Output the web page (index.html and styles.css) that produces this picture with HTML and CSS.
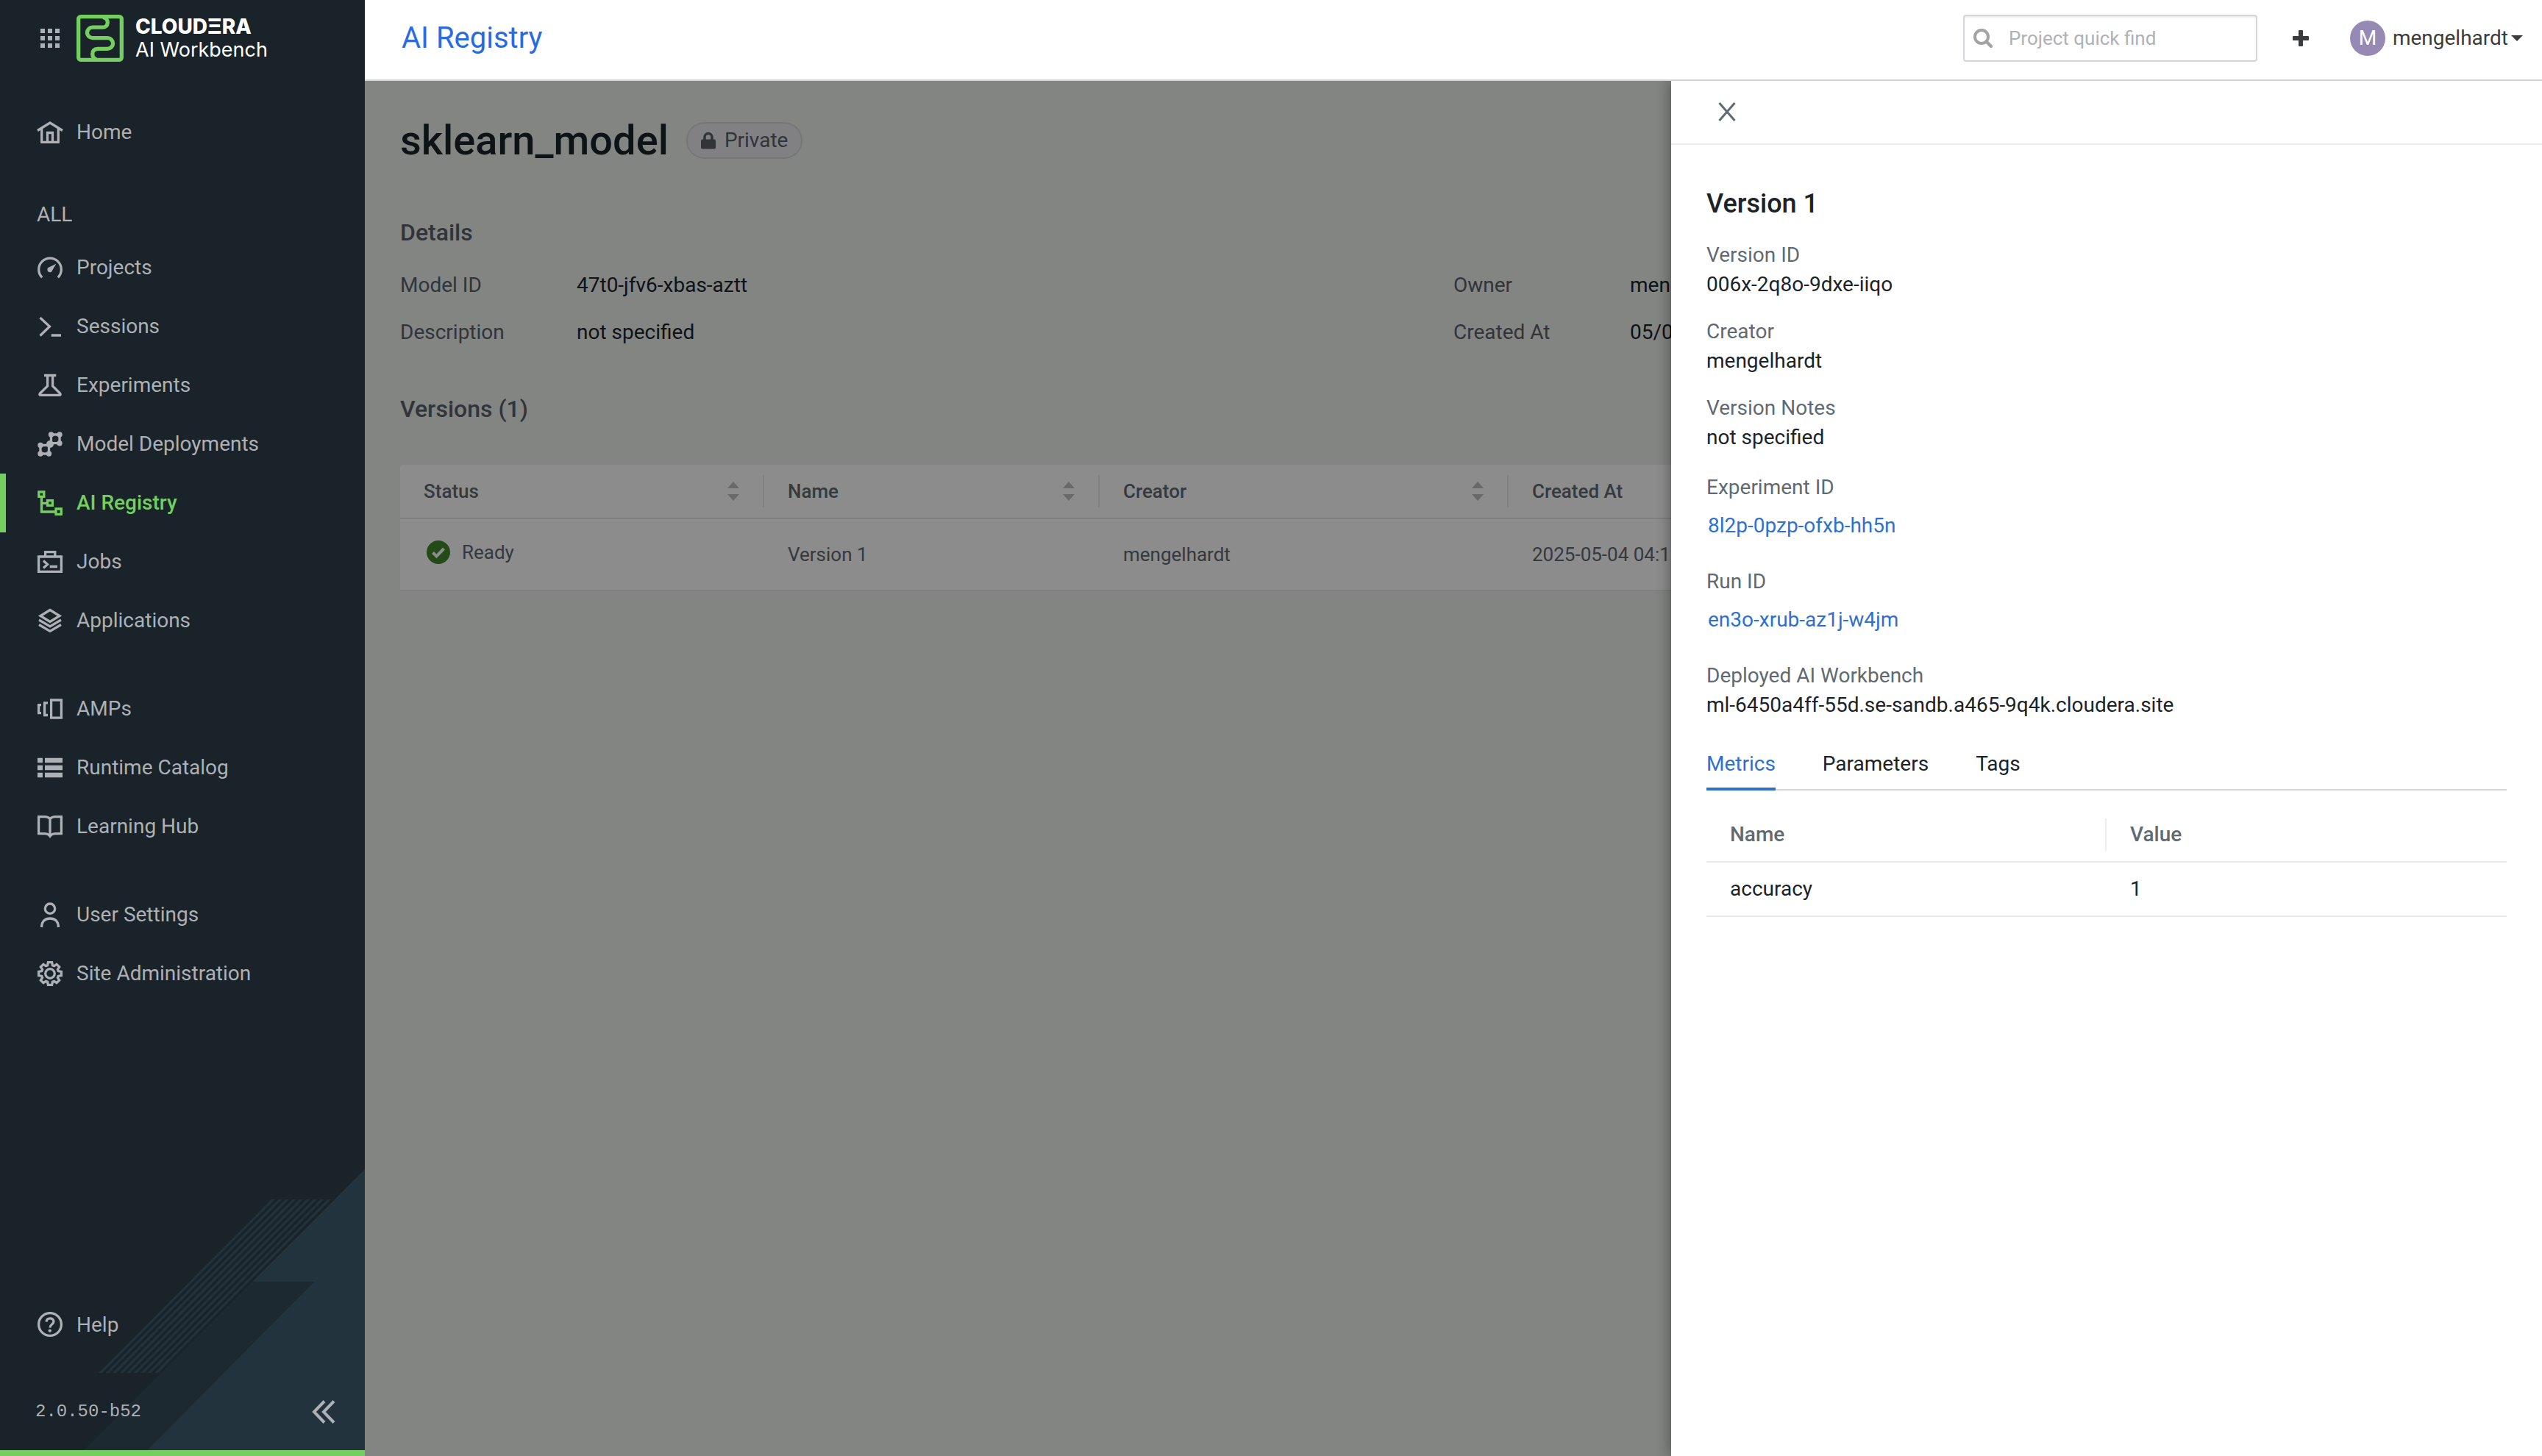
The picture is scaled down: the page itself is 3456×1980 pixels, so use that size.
FILE: index.html
```html
<!DOCTYPE html>
<html lang="en">
<head>
<meta charset="utf-8">
<title>AI Registry - sklearn_model</title>
<meta name="viewport" content="width=device-width, initial-scale=1">
<link rel="stylesheet" href="styles.css">
</head>
<body>
<div class="app">
  <aside class="sidebar">
    <svg class="sidebar-art" viewBox="0 0 496 382" aria-hidden="true">
      <path fill="#1c2931" d="M342 153H427L200 382H114Z"/>
      <path fill="#22333d" d="M496 0V382H200L427 153H342Z"/>
      <path fill="#192329" d="M369 41H455L219 277H134Z"/>
      <path fill="#21323b" d="M369 41h5L139 277h-5zM378.500 41h5L148.500 277h-5zM388 41h5L158 277h-5zM397.500 41h5L167.500 277h-5zM407 41h5L177 277h-5zM416.500 41h5L186.500 277h-5zM426 41h5L196 277h-5zM435.500 41h5L205.500 277h-5zM445 41h5L215 277h-5z"/>
    </svg>
    <div class="brand">
      <button class="icon-button" type="button" aria-label="Apps">
        <svg class="apps-icon" viewBox="0 0 28 28"><path fill="currentColor" d="M1 1h6v6H1zM11 1h6v6h-6zM21 1h6v6h-6zM1 11h6v6H1zM11 11h6v6h-6zM21 11h6v6h-6zM1 21h6v6H1zM11 21h6v6h-6zM21 21h6v6h-6z"/></svg>
      </button>
      <a class="brand-link" href="#">
        <svg class="brand-mark" viewBox="0 0 64 64" fill="none" stroke="#74cf60" stroke-width="5.300" aria-hidden="true">
          <rect x="2.650" y="2.650" width="58.700" height="58.700" rx="3"/>
          <path d="M36 3.500Q42.300 5 42.300 10.500Q42 17.200 35 17.200H21.700A7.200 7.200 0 0 0 21.700 31.600H42.200A7.400 7.400 0 0 1 42.200 46.400H29Q21.700 46.800 21.700 53.500Q21.700 59 27 61"/>
        </svg>
        <span class="brand-text"><span class="brand-name">CLOUDΞRA</span><span class="brand-product">AI Workbench</span></span>
      </a>
    </div>
    <nav class="nav" aria-label="Main">
      <a class="nav-item" href="#"><svg class="nav-icon" viewBox="0 0 36 36"><path d="M1 15.500 18 5 35 15.500M6.700 13V31.300H29.300V13M14.500 31V18.500H21.500V31"/></svg>Home</a>
      <div class="nav-heading">ALL</div>
      <a class="nav-item" href="#"><svg class="nav-icon" viewBox="0 0 36 36"><path d="M7.200 31.300A15.300 15.300 0 1 1 28.800 31.300"/><path class="solid" d="M26.300 12.700 21.300 21.500A3.500 3.500 0 1 1 17 17.300Z"/></svg>Projects</a>
      <a class="nav-item" href="#"><svg class="nav-icon" viewBox="0 0 36 36"><path d="M4.500 6 17.500 18 4.500 30.500M19.700 30H33"/></svg>Sessions</a>
      <a class="nav-item" href="#"><svg class="nav-icon" viewBox="0 0 36 36"><path d="M10 4.500H26.300M14.600 4.500V19L4.300 29Q3 31.300 5 31.300H31Q33 31.300 31.700 29L21.600 19V4.500"/></svg>Experiments</a>
      <a class="nav-item" href="#"><svg class="nav-icon" viewBox="0 0 36 36"><path d="M19.500 5H31V16.700H19.500ZM5 19.500H16.500V31H5Z"/><g class="solid"><circle cx="19.500" cy="5" r="3.700"/><circle cx="31" cy="5" r="3.700"/><circle cx="31" cy="16.700" r="3.700"/><circle cx="18" cy="18" r="5"/><circle cx="5" cy="19.500" r="3.700"/><circle cx="5" cy="31" r="3.700"/><circle cx="16.500" cy="31" r="3.700"/></g></svg>Model Deployments</a>
      <a class="nav-item active" href="#" aria-current="page"><svg class="nav-icon" viewBox="0 0 36 36"><path d="M2.800 2.800H9.800V9.300H2.800ZM14.600 14.600H21.400V21.400H14.600ZM26 26H33.300V33.300H26ZM6.500 10V30H25M6.500 18.300H14"/></svg>AI Registry</a>
      <a class="nav-item" href="#"><svg class="nav-icon" viewBox="0 0 36 36"><path d="M2.600 11H33.400V31.400H2.600ZM11.600 11V4.600H24.800V11M9 16.500 14.500 21.500 9 26.500M17.700 24.500H28"/></svg>Jobs</a>
      <a class="nav-item" href="#"><svg class="nav-icon" viewBox="0 0 36 36"><path d="M18 3.500 31 11.500 18 19.500 5 11.500ZM3 17 18 25.800 33 17M3 23.500 18 32.300 33 23.500"/></svg>Applications</a>
      <a class="nav-item nav-gap" href="#"><svg class="nav-icon" viewBox="0 0 36 36"><path d="M19.600 6H33.400V30.200H19.600ZM15 9.800H10.600V26.500H15M6 12.600H2.600V23.600H6"/></svg>AMPs</a>
      <a class="nav-item" href="#"><svg class="nav-icon" viewBox="0 0 36 36"><path class="solid" d="M1 4.700H8V11.300H1ZM11 4.700H35V11.300H11ZM1 14.700H8V21.300H1ZM11 14.700H35V21.300H11ZM1 24.700H8V31.300H1ZM11 24.700H35V31.300H11Z"/></svg>Runtime Catalog</a>
      <a class="nav-item" href="#"><svg class="nav-icon" viewBox="0 0 36 36"><path d="M2.600 4.600H11Q16.500 5 18 8Q19.500 5 25 4.600H33.400V27.700H25Q20 28 18 31Q16 28 11 27.700H2.600ZM18 8V31"/></svg>Learning Hub</a>
      <a class="nav-item nav-gap" href="#"><svg class="nav-icon" viewBox="0 0 36 36"><circle cx="18" cy="9.700" r="6.700"/><path d="M6.600 35C6.600 27 11 23 18 23S29.400 27 29.400 35"/></svg>User Settings</a>
      <a class="nav-item" href="#"><svg class="nav-icon" viewBox="0 0 36 36"><circle cx="18" cy="18" r="6.300"/><path d="M14.600 6.700 15.400 2.600H20.600L21.400 6.700 23.600 7.600 27 5.300 30.700 9 28.400 12.400 29.300 14.600 33.400 15.400V20.600L29.300 21.400 28.400 23.600 30.700 27 27 30.700 23.600 28.400 21.400 29.300 20.600 33.400H15.400L14.600 29.300 12.400 28.400 9 30.700 5.300 27 7.600 23.600 6.700 21.400 2.600 20.600V15.400L6.700 14.600 7.600 12.400 5.300 9 9 5.300 12.400 7.600Z"/></svg>Site Administration</a>
    </nav>
    <div class="sidebar-foot">
      <a class="nav-item" href="#"><svg class="nav-icon" viewBox="0 0 36 36"><circle cx="18" cy="17" r="15.400"/><path d="M13 13.500Q13.500 8.800 18 8.800T23 13Q23 15 20.500 17T18 21.500"/><circle class="solid" cx="17.800" cy="25.600" r="2.200"/></svg>Help</a>
      <div class="version-row">
        <span class="version">2.0.50-b52</span>
        <button class="icon-button" type="button" aria-label="Collapse sidebar">
          <svg class="collapse-icon" viewBox="0 0 32 32" fill="none" stroke="currentColor" stroke-width="4"><path d="M17 1.500 3 16 17 30.500M30 1.500 16 16 30 30.500"/></svg>
        </button>
      </div>
    </div>
  </aside>

  <div class="page">
    <header class="topbar">
      <a class="topbar-title" href="#">AI Registry</a>
      <div class="search">
        <svg class="search-icon" viewBox="0 0 26 26" fill="none" stroke="#a3a3a3" aria-hidden="true"><circle cx="11" cy="11" r="9" stroke-width="4"/><path d="m17.500 17.500 6.500 6.500" stroke-width="4.500" stroke-linecap="round"/></svg>
        <input class="search-input" type="search" placeholder="Project quick find" aria-label="Project quick find">
      </div>
      <button class="icon-button add" type="button" aria-label="New">
        <svg class="add-icon" viewBox="0 0 22 22" aria-hidden="true"><path fill="currentColor" d="M9 0h4q1 0 1 1v7h7q1 0 1 1v4q0 1-1 1h-7v7q0 1-1 1H9q-1 0-1-1v-7H1q-1 0-1-1V9q0-1 1-1h7V1q0-1 1-1Z"/></svg>
      </button>
      <button class="user" type="button"><span class="avatar">M</span><span class="user-name">mengelhardt</span><svg class="caret" viewBox="0 0 16 8" aria-hidden="true"><path fill="currentColor" d="M0 0H16L8 8Z"/></svg></button>
    </header>

    <div class="workspace">
      <main class="content">
        <div class="title-row">
          <h1 class="title">sklearn_model</h1>
          <span class="badge"><svg class="lock" viewBox="0 0 20 24" aria-hidden="true"><path fill="none" stroke="currentColor" stroke-width="3.500" d="M5 11V7.500a5 5 0 0 1 10 0V11"/><rect fill="currentColor" y="10.500" width="20" height="13" rx="2"/></svg>Private</span>
        </div>
        <h2 class="section-title details-title">Details</h2>
        <dl class="details">
          <div class="detail"><dt>Model ID</dt><dd>47t0-jfv6-xbas-aztt</dd></div>
          <div class="detail"><dt>Owner</dt><dd>mengelhardt</dd></div>
          <div class="detail"><dt>Description</dt><dd>not specified</dd></div>
          <div class="detail"><dt>Created At</dt><dd>05/04/2025</dd></div>
        </dl>
        <h2 class="section-title versions-title">Versions (1)</h2>
        <table class="table versions">
          <colgroup><col class="col-status"><col class="col-name"><col class="col-creator"><col></colgroup>
          <thead>
            <tr>
              <th scope="col"><div class="th">Status<svg class="sort" viewBox="0 0 16 26" aria-hidden="true"><path fill="#bfbfbf" d="M0 9H16L8 0ZM0 17H16L8 26Z"/></svg></div></th>
              <th scope="col"><div class="th">Name<svg class="sort" viewBox="0 0 16 26" aria-hidden="true"><path fill="#bfbfbf" d="M0 9H16L8 0ZM0 17H16L8 26Z"/></svg></div></th>
              <th scope="col"><div class="th">Creator<svg class="sort" viewBox="0 0 16 26" aria-hidden="true"><path fill="#bfbfbf" d="M0 9H16L8 0ZM0 17H16L8 26Z"/></svg></div></th>
              <th scope="col"><div class="th">Created At</div></th>
            </tr>
          </thead>
          <tbody>
            <tr>
              <td><span class="status"><svg class="status-icon" viewBox="0 0 32 32" aria-hidden="true"><circle cx="16" cy="16" r="16" fill="#40882a"/><path fill="none" stroke="#fff" stroke-width="4" d="m8.500 16.500 5 5L23.500 11"/></svg>Ready</span></td>
              <td>Version 1</td>
              <td>mengelhardt</td>
              <td>2025-05-04 04:1</td>
            </tr>
          </tbody>
        </table>
      </main>
      <div class="mask"></div>
      <section class="drawer" role="dialog" aria-labelledby="drawer-title">
        <div class="drawer-head">
          <button class="icon-button" type="button" aria-label="Close"><svg class="close-icon" viewBox="0 0 24 26" fill="none" stroke="#5f6a72" stroke-width="3"><path d="M1.500 1 22.500 25M22.500 1 1.500 25"/></svg></button>
        </div>
        <div class="drawer-body">
          <h2 class="drawer-title" id="drawer-title">Version 1</h2>
          <dl class="fields">
            <div><dt>Version ID</dt><dd>006x-2q8o-9dxe-iiqo</dd></div>
            <div><dt>Creator</dt><dd>mengelhardt</dd></div>
            <div><dt>Version Notes</dt><dd>not specified</dd></div>
          </dl>
          <dl class="fields">
            <div><dt>Experiment ID</dt><dd><a class="link" href="#">8l2p-0pzp-ofxb-hh5n</a></dd></div>
            <div><dt>Run ID</dt><dd><a class="link" href="#">en3o-xrub-az1j-w4jm</a></dd></div>
            <div><dt>Deployed AI Workbench</dt><dd>ml-6450a4ff-55d.se-sandb.a465-9q4k.cloudera.site</dd></div>
          </dl>
          <div class="tabs" role="tablist">
            <button class="tab selected" type="button" role="tab" aria-selected="true">Metrics</button>
            <button class="tab" type="button" role="tab" aria-selected="false">Parameters</button>
            <button class="tab" type="button" role="tab" aria-selected="false">Tags</button>
          </div>
          <table class="table metrics">
            <thead><tr><th scope="col"><div class="th">Name</div></th><th scope="col"><div class="th">Value</div></th></tr></thead>
            <tbody><tr><td>accuracy</td><td>1</td></tr></tbody>
          </table>
        </div>
      </section>
    </div>
  </div>
</div>
</body>
</html>
```
FILE: styles.css
```css
*, *::before, *::after { box-sizing: border-box; }

body {
  margin: 0;
  font-family: Roboto, "Liberation Sans", sans-serif;
  font-size: 28px;
  line-height: 40px;
  color: #1b2329;
}

h1, h2, dl, dd { margin: 0; }
a { text-decoration: none; color: inherit; }
button { font: inherit; color: inherit; background: none; border: 0; padding: 0; cursor: pointer; }
svg { display: block; flex: none; }

.icon-button { display: flex; align-items: center; justify-content: center; }

.app { display: grid; grid-template-columns: 496px minmax(0, 1fr); min-height: 100vh; }

/* Sidebar */
.sidebar {
  position: relative;
  display: flex;
  flex-direction: column;
  background: #192329;
  color: #adb0b5;
  border-bottom: 8px solid #74cf60;
}
.sidebar-art { position: absolute; left: 0; bottom: 0; width: 100%; }
.brand { display: flex; align-items: center; gap: 22px; padding: 20px 54px; }
.apps-icon { width: 28px; height: 28px; }
.brand-link { display: flex; align-items: center; gap: 16px; color: #fff; }
.brand-mark { width: 64px; height: 64px; }
.brand-text { display: flex; flex-direction: column; font-family: Inter, sans-serif; line-height: 32px; }
.brand-name { font-weight: 800; }
.brand-product { font-size: 27px; }
.nav { padding-top: 36px; }
.nav-item { position: relative; display: flex; align-items: center; gap: 18px; height: 80px; padding-left: 50px; }
.nav-item.active { color: #74cf60; font-weight: 500; }
.nav-item.active::before { content: ""; position: absolute; left: 0; top: 0; bottom: 0; width: 8px; background: #74cf60; }
.nav-gap { margin-top: 40px; }
.nav-heading { padding: 52px 50px 12px; }
.nav-icon { width: 36px; height: 36px; fill: none; stroke: currentColor; stroke-width: 3.300; }
.nav-icon .solid { fill: currentColor; stroke: none; }
.sidebar-foot { position: relative; margin-top: auto; }
.version-row { display: flex; align-items: center; justify-content: space-between; padding: 62px 40px 36px 48px; }
.version { font: 24px/32px "Liberation Mono", monospace; }
.collapse-icon { width: 32px; height: 32px; }

/* Top bar */
.page { display: flex; flex-direction: column; min-width: 0; }
.topbar {
  display: flex;
  align-items: center;
  height: 110px;
  padding: 0 26px 4px 50px;
  border-bottom: 2px solid #d3d6dc;
  background: #fff;
}
.topbar-title { margin-right: auto; font-size: 40px; line-height: 48px; color: #2a6cdf; }
.search {
  display: flex;
  align-items: center;
  gap: 22px;
  width: 400px;
  height: 64px;
  padding: 0 12px;
  border: 2px solid #d5d6dc;
  border-radius: 4px;
  box-shadow: inset 0 2px 2px rgba(0, 0, 0, .08);
}
.search-icon { width: 26px; height: 26px; }
.search-input { flex: 1; min-width: 0; padding: 0; border: 0; outline: 0; background: none; font: inherit; font-size: 26px; }
.search-input::placeholder { color: #aeb2b7; opacity: 1; }
.add { margin: 0 56px 0 48px; color: #3b3c3e; }
.add-icon { width: 22px; height: 22px; }
.user { display: flex; align-items: center; color: #3b3c3e; }
.avatar { width: 48px; height: 48px; margin-right: 10px; border-radius: 50%; background: #9689b3; color: #fff; line-height: 48px; text-align: center; }
.caret { width: 16px; height: 8px; margin-left: 4px; }

/* Model page */
.workspace { position: relative; flex: 1; overflow: hidden; background: #eff2ef; }
.content { padding: 48px; }
.title-row { display: flex; align-items: center; gap: 24px; }
.title { font-size: 56px; line-height: 66px; font-weight: 500; }
.badge {
  display: flex;
  align-items: center;
  gap: 12px;
  height: 50px;
  padding: 0 18px;
  border: 2px solid #d8d8d8;
  border-radius: 25px;
  background: #ebecf0;
  color: #5a5f68;
}
.lock { width: 20px; height: 24px; }
.section-title { font-size: 32px; line-height: 40px; font-weight: 500; color: #5a616b; }
.details-title { margin: 72px 0 20px; }
.versions-title { margin: 52px 0 56px; }
.details { display: grid; grid-template-columns: 1fr 1fr; }
.detail { display: flex; padding: 12px 0; }
.detail dt { width: 240px; color: #5a616b; }

.table { width: 100%; table-layout: fixed; border-collapse: separate; border-spacing: 0; text-align: left; }
.table th, .table td { padding: 0 0 0 32px; border-bottom: 2px solid #e8e8e8; }
.table th { height: 74px; font-weight: 500; color: #5f6a72; }
.th { display: flex; align-items: center; justify-content: space-between; height: 44px; padding-right: 32px; border-right: 2px solid #ededed; }
.table th:last-child .th { border-right: 0; }
.sort { width: 16px; height: 26px; }
.versions { font-size: 26px; background: #fff; border-radius: 4px 4px 0 0; color: #5f6a72; }
.versions td { height: 98px; }
.col-status { width: 495px; }
.col-name { width: 456px; }
.col-creator { width: 556px; }
.status { display: flex; align-items: center; gap: 16px; padding: 0 0 6px 4px; }
.status-icon { width: 32px; height: 32px; }

/* Drawer over the model page */
.mask { position: absolute; inset: 0; background: rgba(0, 0, 0, .45); }
.drawer {
  position: absolute;
  top: 0;
  right: 0;
  bottom: 0;
  width: 40%;
  background: #fff;
  box-shadow: -4px 0 16px rgba(0, 0, 0, .3);
}
.drawer-head { display: flex; align-items: center; height: 87px; padding: 0 64px 2px; border-bottom: 2px solid #e8eaeb; }
.close-icon { width: 24px; height: 26px; }
.drawer-body { padding: 48px; }
.drawer-title { margin-bottom: 18px; font-size: 36px; line-height: 64px; font-weight: 500; }
.fields { display: flex; flex-direction: column; gap: 24px; }
.fields + .fields { margin-top: 28px; }
.fields dt { color: #5f6a72; }
.link { display: flex; align-items: center; height: 64px; padding-left: 2px; color: #2f70cf; }
.tabs { display: flex; gap: 64px; margin: 16px 0 24px; border-bottom: 2px solid #d6d6d6; }
.tab { margin-bottom: -2px; padding: 24px 0 12px; border-bottom: 4px solid transparent; }
.tab.selected { color: #2f70cf; border-color: #2f70cf; }
.metrics td { height: 74px; }
```
